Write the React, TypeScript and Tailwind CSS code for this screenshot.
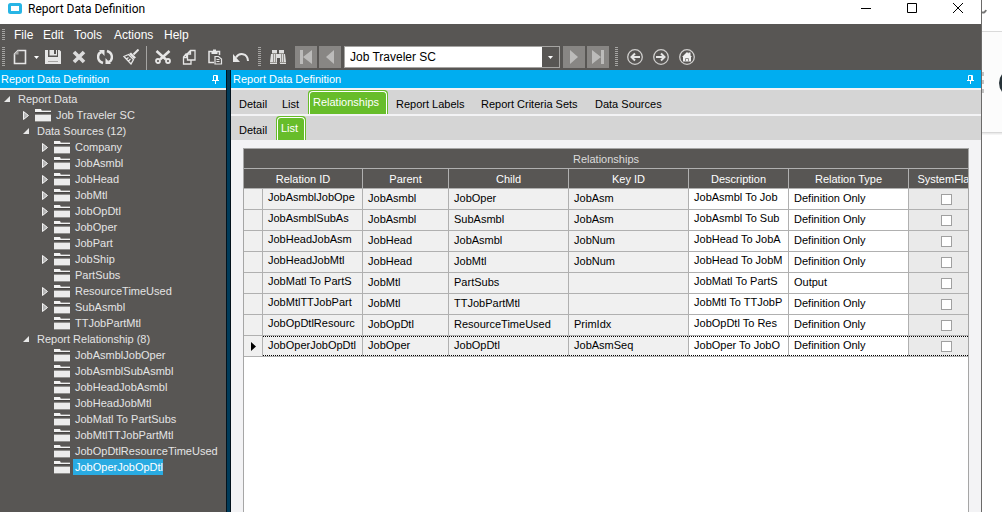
import type { ReactNode } from "react";
import clsx from "clsx";

type TreeNode = {
  label: string;
  level: 0 | 1 | 2;
  state?: "open" | "closed";
  folder?: boolean;
  selected?: boolean;
};

type Relation = {
  id: string;
  parent: string;
  child: string;
  keyId: string;
  description: string;
  type: string;
};

const tree: TreeNode[] = [
  { label: "Report Data", level: 0, state: "open" },
  { label: "Job Traveler SC", level: 1, state: "closed", folder: true },
  { label: "Data Sources (12)", level: 1, state: "open" },
  { label: "Company", level: 2, state: "closed", folder: true },
  { label: "JobAsmbl", level: 2, state: "closed", folder: true },
  { label: "JobHead", level: 2, state: "closed", folder: true },
  { label: "JobMtl", level: 2, state: "closed", folder: true },
  { label: "JobOpDtl", level: 2, state: "closed", folder: true },
  { label: "JobOper", level: 2, state: "closed", folder: true },
  { label: "JobPart", level: 2, folder: true },
  { label: "JobShip", level: 2, state: "closed", folder: true },
  { label: "PartSubs", level: 2, folder: true },
  { label: "ResourceTimeUsed", level: 2, state: "closed", folder: true },
  { label: "SubAsmbl", level: 2, state: "closed", folder: true },
  { label: "TTJobPartMtl", level: 2, folder: true },
  { label: "Report Relationship (8)", level: 1, state: "open" },
  { label: "JobAsmblJobOper", level: 2, folder: true },
  { label: "JobAsmblSubAsmbl", level: 2, folder: true },
  { label: "JobHeadJobAsmbl", level: 2, folder: true },
  { label: "JobHeadJobMtl", level: 2, folder: true },
  { label: "JobMatl To PartSubs", level: 2, folder: true },
  { label: "JobMtlTTJobPartMtl", level: 2, folder: true },
  { label: "JobOpDtlResourceTimeUsed", level: 2, folder: true },
  { label: "JobOperJobOpDtl", level: 2, folder: true, selected: true }
];

const relations: Relation[] = [
  { id: "JobAsmblJobOpe", parent: "JobAsmbl", child: "JobOper", keyId: "JobAsm", description: "JobAsmbl To Job", type: "Definition Only" },
  { id: "JobAsmblSubAs", parent: "JobAsmbl", child: "SubAsmbl", keyId: "JobAsm", description: "JobAsmbl To Sub", type: "Definition Only" },
  { id: "JobHeadJobAsm", parent: "JobHead", child: "JobAsmbl", keyId: "JobNum", description: "JobHead To JobA", type: "Definition Only" },
  { id: "JobHeadJobMtl", parent: "JobHead", child: "JobMtl", keyId: "JobNum", description: "JobHead To JobM", type: "Definition Only" },
  { id: "JobMatl To PartS", parent: "JobMtl", child: "PartSubs", keyId: "", description: "JobMatl To PartS", type: "Output" },
  { id: "JobMtlTTJobPart", parent: "JobMtl", child: "TTJobPartMtl", keyId: "", description: "JobMtl To TTJobP", type: "Definition Only" },
  { id: "JobOpDtlResourc", parent: "JobOpDtl", child: "ResourceTimeUsed", keyId: "PrimIdx", description: "JobOpDtl To Res", type: "Definition Only" },
  { id: "JobOperJobOpDtl", parent: "JobOper", child: "JobOpDtl", keyId: "JobAsmSeq", description: "JobOper To JobO", type: "Definition Only" }
];

const indent = ["pl-1", "pl-[23px]", "pl-[42px]"];

function Grip({ className }: { className?: string }) {
  return (
    <span
      aria-hidden
      className={clsx("w-[3px] shrink-0 bg-[repeating-linear-gradient(to_bottom,#a5a4a2_0px,#a5a4a2_1px,transparent_1px,transparent_2px)]", className)}
    />
  );
}

function ToolButton({ label, className, children }: { label: string; className?: string; children: ReactNode }) {
  return (
    <button type="button" aria-label={label} className={clsx("flex h-[22px] shrink-0 items-center justify-center", className ?? "w-[26px]")}>
      {children}
    </button>
  );
}

function Icon({ children }: { children: ReactNode }) {
  return (
    <svg aria-hidden width="16" height="16" viewBox="0 0 16 16" fill="none" stroke="#e6e6e6" strokeWidth="1.6">
      {children}
    </svg>
  );
}

function Pin() {
  return (
    <svg aria-hidden width="7" height="9" viewBox="0 0 7 9" fill="none" stroke="white" strokeWidth="1">
      <path d="M1.500 5V0.500h4V5M4.500 0v5M0 5.500h7M3.500 6v3" />
    </svg>
  );
}

function PanelTitle() {
  return (
    <div className="flex h-[18px] shrink-0 items-center justify-between bg-[#00adf0] pl-px pr-[7px] text-white">
      <h2>Report Data Definition</h2>
      <button type="button" aria-label="Pin panel">
        <Pin />
      </button>
    </div>
  );
}

function Tab({ label, active, className }: { label: string; active?: boolean; className?: string }) {
  return (
    <button
      type="button"
      role="tab"
      aria-selected={active ?? false}
      className={clsx(
        "h-6 shrink-0 whitespace-nowrap text-left",
        active ? "rounded-t-sm bg-[#67bd2a] px-px pt-px text-white" : "pl-2 pt-1",
        className
      )}
    >
      {active ? <span className="block h-full rounded-t-sm border border-b-0 border-white pl-[3px] pt-0.5">{label}</span> : label}
    </button>
  );
}

function Expander({ state }: { state?: "open" | "closed" }) {
  return (
    <span className="flex w-3 shrink-0 items-center">
      {state === "open" && (
        <svg aria-hidden width="6" height="6" viewBox="0 0 6 6">
          <path d="M6 0v6H0z" fill="#e8e8e8" />
        </svg>
      )}
      {state === "closed" && (
        <svg aria-hidden width="6" height="9" viewBox="0 0 6 9">
          <path d="M0.5 0.5v8L5.5 4.5z" fill="#b5b5b5" stroke="#f4f4f4" />
        </svg>
      )}
    </span>
  );
}

function Folder() {
  return (
    <svg aria-hidden className="mr-[3px] shrink-0" width="16" height="13" viewBox="0 0 16 13">
      <path d="M0 0h6l1 2h9v1H0z" fill="#f2f2f2" />
      <path d="M0 6h16v6H0z" fill="#ececec" />
      <path d="M7 1.500h9M0 5.500h16M0 12.500h16" stroke="#8f8e8c" />
      <path d="M0 3.500h16" stroke="#474543" />
    </svg>
  );
}

function ReportTree() {
  return (
    <ul className="flex-1 overflow-hidden border-t-2 border-[#f0f0f0] bg-[#585654] pt-px text-[#e4e4e4]">
      {tree.map((node) => (
        <li key={node.label} className={clsx("flex h-4 items-center whitespace-nowrap", indent[node.level])}>
          <Expander state={node.state} />
          {node.folder && <Folder />}
          <span className={clsx("h-4 pl-0.5", node.selected && "bg-[#29abe2] text-white")}>{node.label}</span>
        </li>
      ))}
    </ul>
  );
}

function Cell({ children, focused, raised, className }: { children: ReactNode; focused: boolean; raised?: boolean; className: string }) {
  return (
    <td className={clsx("border-b border-r border-[#b0b0b0] p-0", className)}>
      <div
        className={clsx(
          "h-5 overflow-hidden whitespace-nowrap pl-[5px]",
          focused && "border-y border-dotted border-black",
          focused ? "leading-4" : raised ? "leading-4" : "leading-[18px]"
        )}
      >
        {children}
      </div>
    </td>
  );
}

function RelationsGrid() {
  const headCell = "border-b border-r border-[#b0b0b0] p-0 font-normal";
  return (
    <section className="flex-1 overflow-hidden border border-b-0 border-[#a6a6a6] bg-white">
      <h3 className="h-5 border-b border-[#b0b0b0] bg-[#585654] text-center leading-5 text-[#dcdcdc]">Relationships</h3>
      <table className="w-[741px] table-fixed border-separate border-spacing-0">
        <colgroup>
          <col className="w-[19px]" />
          <col className="w-[100px]" />
          <col className="w-[86px]" />
          <col className="w-[120px]" />
          <col className="w-[120px]" />
          <col className="w-[100px]" />
          <col className="w-[120px]" />
          <col className="w-[76px]" />
        </colgroup>
        <thead className="bg-[#585654] text-white">
          <tr className="h-5">
            <th colSpan={2} className={headCell}>Relation ID</th>
            <th className={headCell}>Parent</th>
            <th className={headCell}>Child</th>
            <th className={headCell}>Key ID</th>
            <th className={headCell}>Description</th>
            <th className={headCell}>Relation Type</th>
            <th className={headCell}>SystemFlag</th>
          </tr>
        </thead>
        <tbody>
          {relations.map((row, i) => {
            const focused = i === relations.length - 1;
            return (
              <tr key={row.id} className="h-[21px]">
                <td className="border-b border-r border-[#b0b0b0] bg-[#f0f0f0] p-0">
                  {focused && (
                    <svg aria-hidden className="ml-[7px]" width="5" height="9" viewBox="0 0 5 9">
                      <path d="M0 0v9l5-4.500z" />
                    </svg>
                  )}
                </td>
                <Cell focused={focused} raised className="bg-[#f0f0f0]">{row.id}</Cell>
                <Cell focused={focused} className="bg-[#f0f0f0]">{row.parent}</Cell>
                <Cell focused={focused} className="bg-[#f0f0f0]">{row.child}</Cell>
                <Cell focused={focused} className="bg-[#f0f0f0]">{row.keyId}</Cell>
                <Cell focused={focused} raised className="bg-white">{row.description}</Cell>
                <Cell focused={focused} className="bg-white">{row.type}</Cell>
                <Cell focused={focused} className="bg-[#eaeaea]">
                  <span className="flex h-full items-center justify-center pr-[5px]">
                    <input
                      type="checkbox"
                      aria-label={`System flag for ${row.id}`}
                      className="size-[11px] appearance-none border border-[#a0a0a0] bg-white"
                    />
                  </span>
                </Cell>
              </tr>
            );
          })}
        </tbody>
      </table>
    </section>
  );
}

function TitleBar() {
  return (
    <header className="flex h-6 shrink-0 items-start bg-white pl-2">
      <svg aria-hidden className="mt-[3px]" width="14" height="11" viewBox="0 0 14 11">
        <rect x="1.500" y="1.500" width="11" height="8" rx="1" fill="white" stroke="#27b5e5" strokeWidth="3" />
      </svg>
      <h1 className="ml-1.5 flex-1 font-[Roboto,'Noto_Sans',sans-serif] text-[12px] leading-[18px] text-black">Report Data Definition</h1>
      <button type="button" aria-label="Minimize" className="flex h-4 w-[46px] items-center justify-center">
        <svg aria-hidden width="10" height="10" viewBox="0 0 10 10" stroke="black">
          <path d="M0 5.500h10" />
        </svg>
      </button>
      <button type="button" aria-label="Maximize" className="flex h-4 w-[46px] items-center justify-center">
        <svg aria-hidden width="10" height="10" viewBox="0 0 10 10" fill="none" stroke="black">
          <path d="M0.500 0.500h9v9h-9z" />
        </svg>
      </button>
      <button type="button" aria-label="Close" className="flex h-4 w-[46px] items-center justify-center">
        <svg aria-hidden width="10" height="10" viewBox="0 0 10 10" stroke="black">
          <path d="M0 0l10 10M10 0L0 10" />
        </svg>
      </button>
    </header>
  );
}

function MenuBar() {
  return (
    <nav className="flex h-[22px] items-center pl-0.5 text-[12px] text-white">
      <Grip className="h-3" />
      <button type="button" className="ml-[9px] w-[29px] text-left">File</button>
      <button type="button" className="w-[31px] text-left">Edit</button>
      <button type="button" className="w-10 text-left">Tools</button>
      <button type="button" className="w-[50px] text-left">Actions</button>
      <button type="button">Help</button>
    </nav>
  );
}

function Toolbar() {
  const nav = "w-[22px] bg-[#888684]";
  return (
    <div className="flex h-6 items-start pl-0.5">
      <Grip className="mr-[3px] mt-px h-[19px]" />
      <ToolButton label="New" className="w-6">
        <Icon>
          <path d="M6 1.500h7.500v13h-11V5z" />
          <path d="M6.500 1v4.500H2z" fill="#a5a4a2" stroke="none" />
        </Icon>
      </ToolButton>
      <ToolButton label="New options" className="w-2">
        <svg aria-hidden width="5" height="3" viewBox="0 0 5 3">
          <path d="M0 0h5L2.500 3z" fill="white" />
        </svg>
      </ToolButton>
      <ToolButton label="Save">
        <Icon>
          <path d="M0 1h3v7h10V1h1.500L16 2.500V15H0z" fill="#e6e6e6" stroke="none" />
          <path d="M4.500 1H12v5.500H4.500z" fill="#e6e6e6" stroke="none" />
          <path d="M9 1h2v4H9z" fill="#585654" stroke="none" />
          <path d="M3 12.500h10" stroke="#a5a4a2" strokeWidth="1" />
        </Icon>
      </ToolButton>
      <ToolButton label="Delete">
        <Icon>
          <path d="M3 3l10 10M13 3L3 13" stroke="#dcdcdc" strokeWidth="3.600" />
        </Icon>
      </ToolButton>
      <ToolButton label="Refresh">
        <Icon>
          <path d="M6 14C-0.500 12 0 4.500 4.500 3M10 2C16.500 4 16 11.500 11.500 13" strokeWidth="2.400" />
          <path d="M2 1h5.500v6zM14 15H8.500V9z" fill="#e6e6e6" stroke="none" />
        </Icon>
      </ToolButton>
      <ToolButton label="Clear">
        <Icon>
          <path d="M15.500 0.500L10.500 5.500" strokeWidth="2" />
          <path d="M8 3.500l5 5-2 1.500-5-5z" fill="#e6e6e6" stroke="none" />
          <path d="M5.500 5.500L1 7.500 8 15 10.500 10.500zM3.500 10l2-1.500M5.500 12l2-2" strokeWidth="1.300" />
        </Icon>
      </ToolButton>
      <span aria-hidden className="ml-0.5 mr-[3px] h-6 w-px bg-[#a5a4a2]" />
      <ToolButton label="Cut">
        <Icon>
          <path d="M1.500 2l9.500 8.500M14.500 2L5 10.500" strokeWidth="2.600" />
          <circle cx="3" cy="12" r="2" strokeWidth="1.800" />
          <circle cx="13" cy="12" r="2" strokeWidth="1.800" />
        </Icon>
      </ToolButton>
      <ToolButton label="Copy">
        <Icon>
          <path d="M9.500 1.500h4.500v9.500H6.500V4.500zM9.500 1.500v3.500h-3" strokeWidth="1.300" />
          <path d="M6.500 5H5L2.500 8v7h7.500v-4M5.500 5v3.500h-3" strokeWidth="1.300" />
        </Icon>
      </ToolButton>
      <ToolButton label="Paste">
        <Icon>
          <path d="M7 13.500H2v-11h10.500V6" strokeWidth="1.500" />
          <path d="M4.500 5h6V2H9V0.500H6V2H4.500z" fill="#e6e6e6" stroke="none" />
          <path d="M8 7.500h3.500L14.500 10v5H8zM9.500 10.500h3M9.500 12.500h3" strokeWidth="1.200" />
        </Icon>
      </ToolButton>
      <ToolButton label="Undo">
        <Icon>
          <path d="M3 8.500C6 3.500 14.500 3.500 15 12" strokeWidth="2" />
          <path d="M0 5v8h7z" fill="#e6e6e6" stroke="none" />
        </Icon>
      </ToolButton>
      <Grip className="mx-1 mt-px h-[19px]" />
      <ToolButton label="Find">
        <Icon>
          <path d="M2 1h5v4h2V1h5v4h1l1 8v2h-6V9H7v6H0v-2l1-8h1z" fill="#dedede" stroke="none" />
          <path d="M2 4.500h5M9 4.500h5M3.500 5v8M5.500 5v8M11.500 5v8M13.500 5v8M0 13.500h6.500M9.500 13.500H16" stroke="#95938f" strokeWidth="1" />
        </Icon>
      </ToolButton>
      <div className="ml-1 flex gap-0.5">
        <ToolButton label="First record" className={nav}>
          <svg aria-hidden width="12" height="14" viewBox="0 0 12 14" fill="#bcbbba">
            <path d="M0 0h3v14H0zM12 0v14L3 7z" />
          </svg>
        </ToolButton>
        <ToolButton label="Previous record" className={nav}>
          <svg aria-hidden width="8" height="14" viewBox="0 0 8 14" fill="#bcbbba">
            <path d="M8 0v14L0 7z" />
          </svg>
        </ToolButton>
      </div>
      <div className="mx-[3px] flex h-[22px] w-[216px] border border-[#a5a4a2] bg-[#585654]">
        <select aria-label="Record" className="min-w-0 flex-1 appearance-none bg-white pl-[5px] text-[12px] text-black">
          <option>Job Traveler SC</option>
        </select>
        <span aria-hidden className="flex w-[17px] items-center justify-center">
          <svg width="5" height="3" viewBox="0 0 5 3">
            <path d="M0 0h5L2.500 3z" fill="white" />
          </svg>
        </span>
      </div>
      <div className="flex gap-0.5">
        <ToolButton label="Next record" className={nav}>
          <svg aria-hidden width="8" height="14" viewBox="0 0 8 14" fill="#bcbbba">
            <path d="M0 0v14l8-7z" />
          </svg>
        </ToolButton>
        <ToolButton label="Last record" className={nav}>
          <svg aria-hidden width="12" height="14" viewBox="0 0 12 14" fill="#bcbbba">
            <path d="M9 0h3v14H9zM0 0v14l9-7z" />
          </svg>
        </ToolButton>
      </div>
      <Grip className="ml-1.5 mr-1 mt-px h-[19px]" />
      <ToolButton label="Back">
        <Icon>
          <circle cx="8" cy="8" r="7.300" stroke="#cfcecd" strokeWidth="1.300" />
          <path d="M4.500 8H13M8 4.500L4.500 8 8 11.500" strokeWidth="2" />
        </Icon>
      </ToolButton>
      <ToolButton label="Forward">
        <Icon>
          <circle cx="8" cy="8" r="7.300" stroke="#cfcecd" strokeWidth="1.300" />
          <path d="M3 8h8.500M8 4.500L11.500 8 8 11.500" strokeWidth="2" />
        </Icon>
      </ToolButton>
      <ToolButton label="Home">
        <Icon>
          <circle cx="8" cy="8" r="7.300" stroke="#cfcecd" strokeWidth="1.300" />
          <path d="M8 3l1.500 1.500V3.500h2v3L13 8h-1v4.500H4V8H3z" fill="#f0f0f0" stroke="none" />
          <path d="M6.500 12.500v-3h3v3" stroke="#8f8e8c" strokeWidth="1" />
        </Icon>
      </ToolButton>
    </div>
  );
}

// sliver of the browser window behind this one
function Backdrop() {
  return (
    <aside aria-hidden className="w-5 shrink-0 bg-white">
      <svg width="20" height="140" viewBox="0 0 20 140" fill="none">
        <path d="M0 31.500h20" stroke="#dadada" />
        <path d="M0 32h20v100H0z" fill="#fcfcfc" />
        <path d="M0 132.500h20" stroke="#d8d8d8" />
        <path d="M0 133.500h20" stroke="#ebebeb" />
        <path d="M0 134.500h20" stroke="#f5f5f5" />
        <path d="M0 12c1 1 3 1 4-2" stroke="#777" strokeWidth="2" />
        <path d="M0 72h2v4H0zM0 80h2v4H0zM0 89h2v4H0z" fill="#c4c4c4" />
        <circle cx="31" cy="83" r="14" fill="#263238" />
      </svg>
    </aside>
  );
}

export default function App() {
  return (
    <div className="flex h-screen overflow-hidden font-['Liberation_Sans',Arial,sans-serif] text-[11px] leading-4 text-black">
      <div className="flex min-w-0 flex-1 flex-col border-r border-[#6b6a69]">
        <TitleBar />
        <div className="shrink-0 bg-[#585654]">
          <MenuBar />
          <Toolbar />
        </div>
        <div className="flex min-h-0 flex-1">
          <div className="flex w-[226px] shrink-0 flex-col">
            <PanelTitle />
            <ReportTree />
          </div>
          <div className="w-[5px] shrink-0 border-x border-[#04131d] bg-[#003b5a]" />
          <main className="flex min-w-0 flex-1 flex-col bg-[#f3f3f5]">
            <div className="flex flex-col bg-[#00adf0] pl-px">
              <PanelTitle />
            </div>
            <div role="tablist" aria-label="Sections" className="mt-0.5 flex h-6 shrink-0 bg-[#d5d5d5]">
              <Tab label="Detail" className="w-[43px]" />
              <Tab label="List" className="w-[34px]" />
              <Tab label="Relationships" active className="w-20" />
              <Tab label="Report Labels" className="w-[85px]" />
              <Tab label="Report Criteria Sets" className="w-[114px]" />
              <Tab label="Data Sources" />
            </div>
            <div role="tablist" aria-label="Relationship views" className="mt-0.5 flex h-6 shrink-0 bg-[#d5d5d5]">
              <Tab label="Detail" className="w-[45px]" />
              <Tab label="List" active className="w-[30px]" />
            </div>
            <div className="flex min-h-0 flex-1 px-3 pt-2">
              <RelationsGrid />
            </div>
          </main>
        </div>
      </div>
      <Backdrop />
    </div>
  );
}
